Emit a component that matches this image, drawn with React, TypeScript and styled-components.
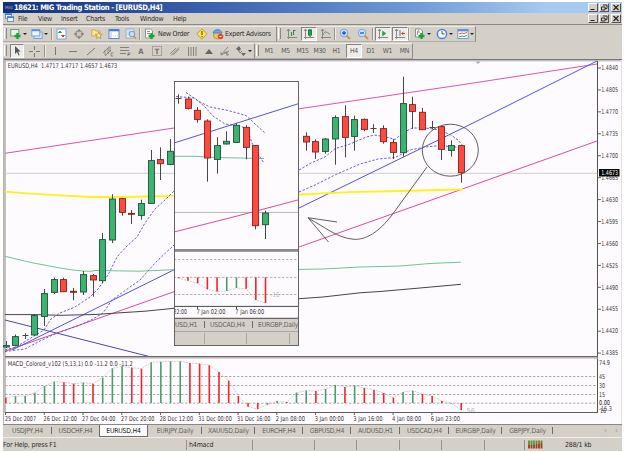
import { ReactNode } from 'react';
import styled, { createGlobalStyle } from 'styled-components';

const GlobalStyle = createGlobalStyle`
  body {
    margin: 0;
    background-color: #fefefe;
    font-family: 'DejaVu Sans Condensed', 'DejaVu Sans', sans-serif;
    font-size: 6.6px;
    color: #2c2a2a;
  }
`;

const Window = styled.div`
  width: 619px;
  height: 449px;
  padding: 2px 3px 1px;
  display: flex;
  flex-direction: column;
  white-space: nowrap;
`;

const TitleBar = styled.div`
  display: flex;
  align-items: center;
  height: 11px;
  background: linear-gradient(90deg, #12307c, #3b60ad 33%, #6f99d8 66%, #a6caf0 88%);
  color: white;
  font-size: 7.6px;
  font-weight: bold;
  letter-spacing: -0.39px;
`;

const TitleIcon = styled.div`
  width: 7px;
  margin: 0 2px;
  font-size: 4px;
  color: #7d86ac;
  letter-spacing: 0;
`;

const Spacer = styled.div`
  flex: 1;
`;

const WinButtons = styled.div`
  display: flex;
  margin-right: 1px;
  gap: 1px;
`;

const WinButton = styled.div`
  width: 8px;
  height: 7px;
  background-color: #d4d0c8;
  border: 1px solid;
  border-color: #f8f8f5 #55524f #55524f #f8f8f5;

  &:last-child {
    margin-left: 1px;
  }

  svg {
    display: block;
  }
`;

const MenuBar = styled.div`
  display: flex;
  align-items: center;
  box-sizing: border-box;
  height: 12px;
  background-color: #d4d0c8;
  border-bottom: 1px solid #8c8984;
`;

const MenuItem = styled.div<{ $w: number }>`
  width: ${(p) => p.$w}px;
  font-size: 7px;
  letter-spacing: -0.25px;
`;

const Toolbar = styled.div`
  display: flex;
  align-items: center;
  box-sizing: border-box;
  height: 17px;
  background-color: #d4d0c8;
`;

const ToolGroup = styled.div<{ $w: number }>`
  display: flex;
  align-items: center;
  box-sizing: border-box;
  width: ${(p) => p.$w}px;
  height: 16px;
  border-right: 1px solid #8e8b86;
  border-bottom: 1px solid #b1aea8;
  border-top: 1px solid #eeece7;
`;

const Grip = styled.div`
  width: 1px;
  height: 11px;
  margin: 0 2px 0 1px;
  flex-shrink: 0;
  border-left: 1px solid #fff;
  border-right: 1px solid #8c8984;
`;

const Divider = styled.div`
  width: 1px;
  height: 12px;
  flex-shrink: 0;
  background-color: #95928c;
  border-right: 1px solid #f1efea;
`;

const Tool = styled.div<{ $w: number; $on?: boolean }>`
  display: flex;
  align-items: center;
  justify-content: center;
  gap: 1px;
  box-sizing: border-box;
  flex-shrink: 0;
  width: ${(p) => p.$w}px;
  height: 14px;
  ${(p) =>
    p.$on &&
    `margin-left: 1px;
    background-color: #efede9;
    border: 1px solid;
    border-color: #85827d #fff #fff #85827d;`}
`;

// tools with a drop-down sit a little to the left of their slot
const MenuTool = styled(Tool)`
  padding-right: 2px;
`;

const Arrow = styled.div`
  border: 2px solid transparent;
  border-top-color: #222;
  border-bottom: 0;
`;

const ToolText = styled.div<{ $w: number; $ls: number }>`
  width: ${(p) => p.$w}px;
  font-size: 7px;
  letter-spacing: ${(p) => p.$ls}px;
`;

const Period = styled(Tool)`
  color: #5d5a58;
  font-size: 6.8px;
  letter-spacing: -0.3px;
`;

const ChartArea = styled.div`
  position: relative;
  height: 365px;

  svg {
    display: block;
  }
`;

const Inset = styled.div`
  position: absolute;
  left: 171px;
  top: 22px;
  width: 123px;
  height: 263px;
  overflow: hidden;
  border: 1px solid #66625f;
  background-color: #fefbff;
`;

const InsetTabs = styled.div`
  display: flex;
  align-items: center;
  height: 12px;
  background-color: #d4d0c8;
  border-bottom: 1px solid #aba8a2;
  color: #565350;
`;

const InsetStatus = styled.div`
  display: flex;
  height: 13px;
  background-color: #d4d0c8;
`;

const InsetCell = styled.div<{ $w: number }>`
  box-sizing: border-box;
  width: ${(p) => p.$w}px;
  margin: 1px 0;
  border-right: 1px solid #aaa7a1;
`;

const TabBar = styled.div`
  display: flex;
  box-sizing: border-box;
  height: 14px;
  background-color: #d4d0c8;
  border-top: 1px solid #8b8883;
  border-bottom: 1px solid #efede8;
`;

const Tab = styled.div<{ $w: number; $active?: boolean; $bar?: boolean }>`
  position: relative;
  display: flex;
  align-items: center;
  justify-content: center;
  box-sizing: border-box;
  width: ${(p) => p.$w}px;
  height: 12px;
  flex-shrink: 0;
  font-size: 6.8px;
  letter-spacing: -0.2px;
  color: ${(p) => (p.$active ? '#111' : '#666360')};
  background-color: ${(p) => (p.$active ? '#fff' : 'transparent')};
  ${(p) =>
    p.$active &&
    `border: 1px solid #6f6c69;
    border-top: 0;`}
  ${(p) =>
    p.$bar &&
    `&::after {
      content: '';
      position: absolute;
      right: 0;
      top: 2px;
      width: 1px;
      height: 7px;
      background-color: #6e6b68;
    }`}
`;

const InsetTab = styled(Tab)`
  justify-content: flex-start;
  padding-left: ${(p) => (p.$w > 30 ? 5 : 0)}px;
`;

const TabScroll = styled.div`
  margin-left: auto;
  padding-right: 1px;
  font-size: 8px;
  line-height: 11px;
  letter-spacing: 3px;
  color: #9c9994;
`;

const StatusBar = styled.div`
  display: flex;
  align-items: center;
  height: 13px;
  background-color: #d4d0c8;
`;

const StatusCell = styled.div<{ $w: number; $pad?: number; $last?: boolean }>`
  display: flex;
  align-items: center;
  box-sizing: border-box;
  width: ${(p) => p.$w}px;
  height: 10px;
  padding-left: ${(p) => p.$pad ?? 0}px;
  gap: 22px;
  font-size: 7px;
  letter-spacing: -0.17px;
  border-right: ${(p) => (p.$last ? 0 : 1)}px solid #96938e;
`;

const UP = '#3cb371';
const DOWN = '#ff4a40';
const GREEN = '#4d9c6c';
const RED = '#f0252c';

// x, body top, body bottom, wick top, wick bottom, direction
type CandleData = [number, number, number, number, number, 'u' | 'd' | 'x'];

const candles: CandleData[] = [
  [6.3, 345.3, 347.3, 341, 348, 'u'],
  [15.5, 336.3, 345.7, 334.5, 346.5, 'u'],
  [25, 335.7, 335.7, 333.3, 339, 'x'],
  [34.7, 315.3, 335.3, 314, 336, 'u'],
  [44.3, 293.3, 316.7, 289, 326, 'u'],
  [54, 279.3, 292.7, 277.7, 294, 'u'],
  [63.7, 279.3, 292, 277.7, 292, 'd'],
  [73.3, 291, 292.5, 288, 300.3, 'd'],
  [83.3, 274.3, 292.3, 271, 295, 'u'],
  [93, 275.3, 280.3, 274, 296.7, 'd'],
  [102.5, 239.3, 281, 233, 283.3, 'u'],
  [112.3, 198.7, 240.3, 194.3, 243, 'u'],
  [122, 198.3, 212.7, 198, 215.7, 'd'],
  [131.7, 213, 214.5, 210, 224, 'd'],
  [141.3, 203.3, 215.7, 199.7, 219.7, 'u'],
  [151, 160.3, 203.7, 150, 204, 'u'],
  [160.7, 159.3, 164, 147.3, 180, 'd'],
  [170.3, 151, 164.7, 139, 165, 'u'],
  [306.3, 136, 142.3, 132.3, 150.7, 'd'],
  [315.7, 141.3, 152.3, 139.3, 159, 'd'],
  [325.3, 138.7, 151.7, 138, 153.7, 'u'],
  [335.3, 117.3, 139.3, 115.3, 164.7, 'u'],
  [345, 116.3, 137.7, 105.3, 157.3, 'd'],
  [354.7, 119.3, 136.7, 115.7, 150.7, 'u'],
  [364.2, 119, 129.7, 118.5, 131.3, 'd'],
  [373.7, 128, 128, 124.3, 133, 'x'],
  [383.3, 128.3, 142, 125.3, 143.7, 'd'],
  [393.3, 142.3, 152.7, 139, 159, 'd'],
  [403, 103.3, 153, 76.7, 156.7, 'u'],
  [412.7, 104.3, 111.7, 96.7, 129, 'd'],
  [422.3, 112, 130, 108, 130, 'd'],
  [432, 127.7, 127.7, 121, 129.3, 'x'],
  [441.7, 126.3, 149.7, 125.7, 160, 'd'],
  [451.3, 145.3, 150.7, 140.3, 156.7, 'u'],
  [461, 145.3, 173, 145, 182.7, 'd'],
];

const insetCandles: CandleData[] = [
  [178.3, 98, 98, 94.3, 103.7, 'x'],
  [188, 98.7, 108.7, 96.5, 109.5, 'd'],
  [197.7, 110, 119.7, 107, 122.7, 'd'],
  [207.3, 120.7, 158.3, 119.3, 181.7, 'd'],
  [217, 145.3, 159.7, 137.3, 173.7, 'u'],
  [226.7, 141, 144.3, 131.3, 144.3, 'u'],
  [236.3, 125, 142.7, 123.3, 142.7, 'u'],
  [246, 127, 147.7, 125.3, 159.3, 'd'],
  [255.7, 145.3, 226, 145, 229.3, 'd'],
  [265.3, 212.7, 225, 210.7, 239, 'u'],
];

// histogram values as pixel tops, negative values hang below the zero line
const macd: [number, 'g' | 'r'][] = [
  [397.7, 'r'], [396.3, 'g'], [396, 'g'], [392.7, 'g'], [386, 'g'], [381.7, 'g'],
  [382.3, 'r'], [383.7, 'r'], [382.7, 'g'], [383.7, 'r'], [377.7, 'g'], [368.3, 'g'],
  [366.3, 'g'], [367.7, 'r'], [368.7, 'r'], [362.3, 'g'], [361.7, 'g'], [361.3, 'g'],
  [361.3, 'g'], [363, 'r'], [363.7, 'r'], [365.3, 'r'], [372, 'r'], [380.7, 'r'],
  [396, 'r'], [406.7, 'r'], [409, 'r'], [404.7, 'g'], [401, 'g'], [402, 'r'],
  [392.7, 'g'], [390.5, 'g'], [391, 'r'], [389, 'g'], [385, 'g'], [387, 'r'],
  [385.7, 'g'], [388, 'r'], [390, 'r'], [393, 'r'], [397.7, 'r'], [392, 'g'],
  [390.7, 'g'], [394, 'r'], [396, 'r'], [401, 'r'], [403.6, 'g'], [410, 'r'],
];

const insetMacd: [number, 'g' | 'r'][] = [
  [278.2, 'r'], [280.7, 'r'], [283.3, 'r'], [289.3, 'r'], [291.5, 'r'],
  [291, 'g'], [288, 'g'], [288.8, 'r'], [300, 'r'], [303, 'r'],
];

const prices = [
  '1.4840', '1.4805', '1.4770', '1.4735', '1.4700', '1.4665', '1.4630',
  '1.4595', '1.4560', '1.4525', '1.4490', '1.4455', '1.4420', '1.4385',
];

const dates: [number, number, string][] = [
  [5, 31, '25 Dec 2007'],
  [43.5, 33.5, '26 Dec 12:00'],
  [82, 33.5, '27 Dec 04:00'],
  [121, 33.5, '27 Dec 20:00'],
  [159.7, 33.5, '28 Dec 12:00'],
  [198.3, 33.5, '31 Dec 00:00'],
  [237, 33.5, '31 Dec 16:00'],
  [275.7, 29.3, '2 Jan 08:00'],
  [314.7, 29.3, '3 Jan 00:00'],
  [353.3, 29.3, '3 Jan 16:00'],
  [392, 29.3, '4 Jan 08:00'],
  [430.7, 29.3, '6 Jan 23:00'],
];

const Candle = ({ data }: { data: CandleData }) => {
  const [x, top, bottom, high, low, dir] = data;
  const cx = Math.floor(x) + 0.5;
  return (
    <g stroke="#4a4642">
      <path d={`M${cx} ${high}V${low}`} />
      {dir === 'x' ? (
        <path d={`M${cx - 3} ${Math.floor(top) + 0.5}h6`} />
      ) : (
        <rect
          x={cx - 3}
          y={top + 0.3}
          width="6"
          height={Math.max(bottom - top - 0.6, 1)}
          fill={dir === 'u' ? UP : DOWN}
          stroke={dir === 'u' ? '#1e5137' : '#80231d'}
          strokeWidth=".9"
        />
      )}
    </g>
  );
};

const Label = ({ x, y, w, children, fill = '#3a3636' }: {
  x: number;
  y: number;
  w: number;
  children: string;
  fill?: string;
}) => (
  <text x={x} y={y} textLength={w} lengthAdjust="spacingAndGlyphs" fontSize="6.6" fill={fill}>
    {children}
  </text>
);

const Histogram = ({ data, x0, zero }: { data: [number, 'g' | 'r'][]; x0: number; zero: number }) => (
  <>
    <polyline
      points={data.map(([y], i) => `${x0 + i * 9.69},${y}`).join(' ')}
      fill="none"
      stroke="#c9c5c4"
      strokeDasharray="2 1"
      strokeWidth=".8"
    />
    {data.map(([y, c], i) => (
      <path
        key={i}
        d={`M${x0 + i * 9.69} ${zero}V${y}`}
        stroke={c === 'g' ? GREEN : RED}
        strokeWidth="1.6"
      />
    ))}
  </>
);

const MainChart = () => (
  <svg width="619" height="365" viewBox="3 59 619 365" fill="none">
    <rect x="3" y="59" width="619" height="365" fill="#fefbff" />
    <path d="M3 59.5H622" stroke="#787572" />
    <path d="M4 60.8H621" stroke="#aaa6a5" />
    <path d="M3.5 59V424" stroke="#b6b2ad" />
    <path d="M5 61V413" stroke="#85817e" />
    <path d="M621.5 61V424" stroke="#e3e0dd" />
    <path d="M475.5 61.5h5l-2.5 2.5z" fill="#aaa" />

    <path d="M5 173.3H597" stroke="#d2cfcb" />
    <path d="M5 153.3L174 128L299 108.8L465 84.3L597 64" stroke="#dc55a8" />
    <path d="M5 351.3L174 291.7L299 247L431 200.2L597 141" stroke="#dc4a9e" />
    <path d="M12 350L174 269.8L299 208L465 127L597 61" stroke="#5350e4" />
    <path d="M5 320L148 356.2" stroke="#4d4a9b" />
    <path
      d="M5 314.6H35L60 315.3L95 314.5L120 312.8L145 311.2L174 308.3M299 298.7L323 297L360 292.8L380 291.5L420 288L461 284.3"
      stroke="#4a4442"
    />
    <path
      d="M5 256.3Q30 263 60 268T95 270.5L140 271.2L174 269.7M299 269.4L323 269L360 267L400 266L430 263.5L461 262.2"
      stroke="#70c597"
    />
    <path
      d="M5 191.7L30 193.6L65 195.7L90 197L125 197L174 195.8M299 194.5L350 192.2L400 191L440 190L463 189.3"
      stroke="#fff218"
      strokeWidth="1.8"
    />
    <g stroke="#5552cf" strokeDasharray="2.4 1.6" strokeWidth=".9">
      <path d="M5 350L16 347L44 330L51 319L60 313L75 307L90 297L98 289L108 275L117 257L127 246L137 237L145 223L155 209L165 200L174 191" />
      <path d="M5 351.5L25 349L40 341L55 334L80 325L93 319L103 313L112 300L130 287L140 280L155 263L174 245" />
      <path d="M299 170L311 163L325 157L335 148.7L350 144L365 137.5L374 135L386 137L395 139.5L403 133L412 128L425 128L440 130L451 135L458 140L463 146" />
      <path d="M299 192L315 185L337 174L360 164L378 159L395 157.5L410 150L425 147L440 145.5L461 147.5" />
    </g>

    {candles.map((c) => (
      <Candle key={c[0]} data={c} />
    ))}

    <g stroke="#625e5c">
      <ellipse cx="450.3" cy="150.2" rx="28" ry="26" />
      <path d="M427 167L392 215C379 232 366 240 354 239.3C337 238 325 227 308 218" />
      <path d="M337 222L308 217.7L328.5 242" />
    </g>

    <path d="M597.5 61V413" stroke="#565250" />
    {prices.map((p, i) => (
      <g key={p}>
        <path d={`M598 ${68 + i * 21.93}h3`} stroke="#68625f" />
        <Label x={601.3} y={70.2 + i * 21.93} w={16.7}>
          {p}
        </Label>
      </g>
    ))}
    <rect x="599" y="169" width="20.5" height="7.5" fill="#080808" />
    <Label x={601.3} y={175.2} w={16.7} fill="#fff">
      1.4673
    </Label>
    <Label x={7.7} y={67.8} w={109.5}>
      {'EURUSD,H4\u00a0 1.4717 1.4717 1.4657 1.4673'}
    </Label>

    <path d="M5 356.8H598" stroke="#6d6664" strokeWidth="1.6" />
    <path d="M5 358.2H598" stroke="#c5c2c0" />
    <path
      d="M5 376.5H597M5 385.5H597M5 394.5H597M5 403.2H597"
      stroke="#a5a19f"
      strokeDasharray="2.4 1.6"
      strokeWidth=".9"
    />
    <Histogram data={macd} x0={5.8} zero={403} />
    <Label x={7.7} y={366.2} w={125}>
      MACD_Colored_v102 (5,13,1) 0.0 -11.2 0.0 -11.2
    </Label>
    <Label x={466.5} y={412.6} w={8.5} fill="#b8b5b3">
      56
    </Label>
    <path d="M5 412.5H598" stroke="#625e5b" />
    {dates.map(([x, w, text], i) => (
      <g key={text}>
        <path d={`M${5.5 + i * 38.76} 412v3`} stroke="#625e5b" />
        <Label x={x} y={421} w={w}>
          {text}
        </Label>
      </g>
    ))}
    <Label x={599} y={364.6} w={11}>74.9</Label>
    <Label x={599} y={378.6} w={6}>45</Label>
    <Label x={599} y={387.8} w={6}>30</Label>
    <Label x={599} y={396.8} w={6}>15</Label>
    <Label x={599} y={405.2} w={11} fill="#111">0.00</Label>
    <Label x={599} y={411.4} w={13}>-15.3</Label>
    <Label x={600} y={412.8} w={6}>16</Label>
  </svg>
);

const InsetChart = () => (
  <svg width="124" height="237" viewBox="175 82 124 237" fill="none">
    <path d="M174 212.4H299" stroke="#bbb8b5" />
    <path d="M174 143L299 103.5" stroke="#5350e4" />
    <path d="M174 156.3L195 156.3L215 157.5L264 158.5" stroke="#70c597" />
    <path d="M174 232L240 215.3L299 199.7" stroke="#dc4a9e" />
    <g stroke="#5552cf" strokeDasharray="2.4 1.6" strokeWidth=".9">
      <path d="M186 92.5L198 101L210 107L228 110.5L246 115.5L255 124L265 133" />
      <path d="M176 96.5L195 98L205 107L213 116L225 124L241 126L248 131L252 143L258 154L264 163" />
    </g>
    {insetCandles.map((c) => (
      <Candle key={c[0]} data={c} />
    ))}
    <rect x="174" y="249" width="125" height="2.8" fill="#8b8887" />
    <path
      d="M174 259.5H299M174 277.4H299M174 294.5H299"
      stroke="#aaa7a3"
      strokeDasharray="2.4 1.6"
      strokeWidth=".9"
    />
    <Histogram data={insetMacd} x0={178.3} zero={277.3} />
    <Label x={270.5} y={296.8} w={9} fill="#b8b5b3">-16</Label>
    <path d="M174 306.4H299M197.5 306v3M236.5 306v3" stroke="#454c4a" />
    <Label x={173.5} y={313.8} w={13.5}>22:00</Label>
    <Label x={196.5} y={313.8} w={29}>7 Jan 02:00</Label>
    <Label x={235.3} y={313.8} w={29}>7 Jan 06:00</Label>
    <path d="M174 318.3H299" stroke="#44403e" />
  </svg>
);

const Icon = ({ children, w = 12 }: { children: ReactNode; w?: number }) => (
  <svg width={w} height="12" viewBox={`0 0 ${w} 12`} fill="none" stroke="#7a7773">
    {children}
  </svg>
);

const Plus = () => <path d="M7.5 5v6M4.5 8h6" stroke="#18a238" strokeWidth="2.4" />;

const Axes = () => <path d="M2.5 1v10M1 9.5h10M1 3l1.5-2L4 3" stroke="#8b8783" />;

const Zoom = ({ plus }: { plus?: boolean }) => (
  <Icon>
    <path d="M7.5 7.5l3.5 3.5" stroke="#c79b36" strokeWidth="2" />
    <circle cx="5" cy="5" r="3.8" fill="#c7e0fa" stroke="#7ba1de" />
    <path d={plus ? 'M3 5h4M5 3v4' : 'M3 5h4'} stroke="#2956b8" strokeWidth="1.3" />
  </Icon>
);

const WindowControls = () => (
  <WinButtons>
    <WinButton>
      <svg width="8" height="7">
        <path d="M1.5 5.5h4" stroke="#222" />
      </svg>
    </WinButton>
    <WinButton>
      <svg width="8" height="7" fill="none" stroke="#222" strokeWidth=".9">
        <path d="M3 1h4v3.5H5M1.5 3h3.5v3H1.5z" />
      </svg>
    </WinButton>
    <WinButton>
      <svg width="8" height="7">
        <path d="M1.5 1l5 5M6.5 1l-5 5" stroke="#222" strokeWidth="1.2" />
      </svg>
    </WinButton>
  </WinButtons>
);

const StandardToolbar = () => (
  <Toolbar>
    <ToolGroup $w={274}>
      <Grip />
      <MenuTool $w={20}>
        <Icon>
          <rect x=".8" y="1.5" width="8" height="6.5" fill="#eaf5e9" stroke="#6b9a80" />
          <Plus />
        </Icon>
        <Arrow />
      </MenuTool>
      <MenuTool $w={22}>
        <Icon>
          <rect x="3" y="4" width="8.2" height="6.5" fill="#dbeafa" stroke="#7a9ed0" />
          <rect x=".8" y="1.5" width="8" height="6.5" fill="#eef5ff" stroke="#7a9ed0" />
          <path d="M1 2.5h8" stroke="#5f92da" strokeWidth="1.5" />
        </Icon>
        <Arrow />
      </MenuTool>
      <Divider />
      <Tool $w={17}>
        <Icon w={11}>
          <rect x="1" y="1" width="9" height="10" fill="#fff" stroke="#75a5d8" />
          <path d="M2.5 4.5L4 3l1.5 1.5z" fill="#18a238" stroke="#18a238" />
          <path d="M5.5 7.5h3L7 9z" fill="#df392c" stroke="#df392c" />
        </Icon>
      </Tool>
      <Tool $w={18}>
        <Icon>
          <circle cx="6" cy="6" r="3.4" />
          <path d="M6 1v3.5M6 7.5V11M1 6h3.5M7.5 6H11" />
        </Icon>
      </Tool>
      <Tool $w={17}>
        <Icon>
          <path d="M.8 3V1.7h3l1 1.3h4v5h-8z" fill="#ffe589" stroke="#c2a95c" />
          <path d="M7.7 4l1 2.2 2.5.2-2 1.6.7 2.5-2.2-1.3-2.2 1.3.7-2.5-2-1.6 2.5-.2z" fill="#fff176" stroke="#a88c3c" strokeWidth=".7" />
        </Icon>
      </Tool>
      <Tool $w={17}>
        <Icon>
          <rect x="1" y="1.5" width="10" height="9" fill="#fff" stroke="#5b87d2" />
          <path d="M1 2.5h10" stroke="#4478d0" strokeWidth="1.6" />
          <path d="M3 4v6" stroke="#a4bfe8" />
          <path d="M5 8h5" stroke="#c9dbf3" strokeDasharray="1 1" />
        </Icon>
      </Tool>
      <Tool $w={17}>
        <Icon>
          <path d="M1 1h8v9H1z" fill="#eef5fc" stroke="#9aabc2" />
          <path d="M3 2v6M5 2v6" stroke="#abc6e2" />
          <circle cx="7" cy="6" r="2.8" fill="#c8def5" stroke="#7896c6" />
          <path d="M9 8.3l2.2 2.5" stroke="#c79b36" strokeWidth="1.6" />
        </Icon>
      </Tool>
      <Divider />
      <Tool $w={17}>
        <Icon>
          <path d="M1.5 1h5l2 2v7h-7z" fill="#fff" stroke="#8b9892" />
          <path d="M3 3.5h3M3 5.5h3" stroke="#777" strokeWidth=".8" />
          <Plus />
        </Icon>
      </Tool>
      <ToolText $w={35} $ls={-0.28}>New Order</ToolText>
      <Tool $w={17}>
        <Icon>
          <path d="M6 .8L11.2 6 6 11.2.8 6z" fill="#ffe24d" stroke="#b8a04a" />
          <path d="M6 3v4M6 8v1.3" stroke="#776629" strokeWidth="1.3" />
        </Icon>
      </Tool>
      <Tool $w={15}>
        <Icon>
          <circle cx="5.5" cy="7" r="4" fill="#f5cb51" stroke="#bd963b" />
          <path d="M1 5C2 .5 9 .5 10 5z" fill="#66a7e7" stroke="#4d82c2" />
          <circle cx="8.5" cy="8.5" r="2.8" fill="#e64328" stroke="none" />
          <path d="M7.5 8.5h2" stroke="#fff" />
        </Icon>
      </Tool>
      <ToolText $w={48} $ls={-0.24}>Expert Advisors</ToolText>
    </ToolGroup>
    <ToolGroup $w={199}>
      <Grip />
      <Tool $w={17}>
        <Icon>
          <Axes />
          <path d="M5.5 4v4M7.5 2v5M8 2.5h1.5" stroke="#218c42" />
        </Icon>
      </Tool>
      <Tool $w={16} $on>
        <Icon>
          <Axes />
          <path d="M7 1v8" stroke="#187d36" />
          <rect x="5.5" y="2" width="3" height="5" fill="#28a950" stroke="#187d36" />
        </Icon>
      </Tool>
      <Tool $w={17}>
        <Icon>
          <Axes />
          <path d="M3 7C4.5 3 6 3 10 6.5" stroke="#4f9967" />
        </Icon>
      </Tool>
      <Divider />
      <Tool $w={18}><Zoom plus /></Tool>
      <Tool $w={18}><Zoom /></Tool>
      <Divider />
      <Tool $w={16} $on>
        <Icon>
          <Axes />
          <path d="M5.5 3L9 5.5 5.5 8z" fill="#22a243" stroke="#22a243" strokeWidth=".5" />
        </Icon>
      </Tool>
      <Tool $w={16} $on>
        <Icon>
          <Axes />
          <path d="M6 2v6" stroke="#4573c8" />
          <path d="M11 5.5H8M9.5 4L7.5 5.5 9.5 7" stroke="#d94127" />
        </Icon>
      </Tool>
      <Divider />
      <Tool $w={24}>
        <Icon>
          <path d="M1.5 1h5l2 2v6h-7z" fill="#fff" stroke="#85938a" />
          <path d="M5 2c-2 0-1 4-2 5M3 4h3" strokeWidth=".8" />
          <Plus />
        </Icon>
        <Arrow />
      </Tool>
      <Tool $w={21}>
        <Icon>
          <circle cx="6" cy="6" r="4.6" fill="#f3f9ff" stroke="#5584cf" strokeWidth="1.5" />
          <path d="M6 3v3h2.5" stroke="#555" />
        </Icon>
        <Arrow />
      </Tool>
      <Tool $w={21}>
        <Icon>
          <rect x=".8" y="1.5" width="10.4" height="9" fill="#fff" stroke="#7398cf" />
          <path d="M1 2.5h10" stroke="#5c8cd4" strokeWidth="1.8" />
          <path d="M2 6l3-1 2 .5 3-1" stroke="#cf5948" />
          <path d="M2 9l3-1 2 .5 3-1" stroke="#3f9958" />
        </Icon>
        <Arrow />
      </Tool>
    </ToolGroup>
  </Toolbar>
);

const LineToolbar = () => (
  <Toolbar>
    <ToolGroup $w={252}>
      <Grip />
      <Tool $w={14} $on>
        <Icon w={10}>
          <path d="M3 1v8l2-2 1.5 3.5 1-.5L6.2 6.5h2.5z" fill="#555" stroke="none" />
        </Icon>
      </Tool>
      <Tool $w={20}>
        <Icon><path d="M6.5 1v4M6.5 8v4M1 6.5h4M8 6.5h4" /></Icon>
      </Tool>
      <Divider />
      <Tool $w={18}><Icon><path d="M6.5 2v8" /></Icon></Tool>
      <Tool $w={18}><Icon><path d="M2 6.5h8" /></Icon></Tool>
      <Tool $w={17}><Icon><path d="M2 10l8-7" /></Icon></Tool>
      <Tool $w={17}>
        <Icon>
          <path d="M1 8l6-6M3 11l6-6M3 5v5M6 3v6M8 1v6M9 8h2.5M9 11h2.5M9 8v3" strokeWidth=".8" />
        </Icon>
      </Tool>
      <Tool $w={17}>
        <Icon>
          <path d="M1 2.5h9M1 5.5h9M1 8.5h6M9 11V8h2.5M9 9.5h2" strokeWidth=".9" />
        </Icon>
      </Tool>
      <Tool $w={15}>
        <Icon>
          <text x="3.2" y="9.3" fontSize="7.6" fontWeight="bold" fill="#74716e" stroke="none">A</text>
        </Icon>
      </Tool>
      <Tool $w={18}>
        <Icon>
          <rect x="1.5" y="1.5" width="9" height="9" strokeDasharray="1 1" />
          <text x="3.7" y="8.8" fontSize="7.2" fontWeight="bold" fill="#74716e" stroke="none">T</text>
        </Icon>
      </Tool>
      <Tool $w={17}>
        <Icon><path d="M1 9l6-6M4 10l6-6M2 10.5l8-8" strokeWidth=".8" /></Icon>
      </Tool>
      <Tool $w={17}>
        <Icon><path d="M2.5 2v9M5 2v9M7.5 2v9M10 2v9" strokeWidth=".9" /></Icon>
      </Tool>
      <Tool $w={17}>
        <Icon><path d="M2 9l4-5 4 5z" fill="#686563" stroke="none" /></Icon>
      </Tool>
      <Tool $w={16}>
        <Icon><path d="M2 10l7-8M2 10l8-4M2 10V7M8 6v5M5 7l5 3" strokeWidth=".8" /></Icon>
      </Tool>
      <Tool $w={21}>
        <Icon>
          <path d="M1 4l3-3 2 3-2 2zM6 8h5L8.5 11z" fill="#686563" stroke="none" />
          <path d="M3 5l2 3 2-2" />
        </Icon>
        <Arrow />
      </Tool>
    </ToolGroup>
    <ToolGroup $w={158}>
      <Grip />
      <Period $w={16}>M1</Period>
      <Period $w={17}>M5</Period>
      <Period $w={17}>M15</Period>
      <Period $w={17}>M30</Period>
      <Period $w={17}>H1</Period>
      <Period $w={16} $on>H4</Period>
      <Period $w={17}>D1</Period>
      <Period $w={17}>W1</Period>
      <Period $w={17}>MN</Period>
    </ToolGroup>
  </Toolbar>
);

const tabs: { name: string; w: number; active?: boolean; bar?: boolean }[] = [
  { name: 'USDJPY,H4', w: 49, bar: true },
  { name: 'USDCHF,H4', w: 47 },
  { name: 'EURUSD,H4', w: 49, active: true },
  { name: 'EURJPY,Daily', w: 54, bar: true },
  { name: 'XAUUSD,Daily', w: 53, bar: true },
  { name: 'EURCHF,H4', w: 48, bar: true },
  { name: 'GBPUSD,H4', w: 48, bar: true },
  { name: 'AUDUSD,H1', w: 49, bar: true },
  { name: 'USDCAD,H4', w: 49, bar: true },
  { name: 'EURGBP,Daily', w: 53, bar: true },
  { name: 'GBPJPY,Daily', w: 51, bar: true },
];

const App = () => {
  return (
    <>
      <GlobalStyle />
      <Window>
        <TitleBar>
          <TitleIcon>MIG</TitleIcon>
          18621: MIG Trading Station - [EURUSD,H4]
          <Spacer />
          <WindowControls />
        </TitleBar>
        <MenuBar>
          <MenuItem $w={15}>
            <svg width="12" height="11" fill="#eef4ff" stroke="#6c93cf">
              <rect x="2.5" y="1.5" width="6" height="5" />
              <rect x="4.5" y="4.5" width="6" height="5" />
              <path d="M2 2.5h7M4 5.5h7" stroke="#3d75ca" />
            </svg>
          </MenuItem>
          <MenuItem $w={20}>File</MenuItem>
          <MenuItem $w={23}>View</MenuItem>
          <MenuItem $w={25}>Insert</MenuItem>
          <MenuItem $w={29}>Charts</MenuItem>
          <MenuItem $w={25}>Tools</MenuItem>
          <MenuItem $w={33}>Window</MenuItem>
          <MenuItem $w={20}>Help</MenuItem>
          <Spacer />
          <WindowControls />
        </MenuBar>
        <StandardToolbar />
        <LineToolbar />
        <ChartArea>
          <MainChart />
          <Inset>
            <InsetChart />
            <InsetTabs>
              <InsetTab $w={30} $bar>USD,H1</InsetTab>
              <InsetTab $w={48} $bar>USDCAD,H4</InsetTab>
              <InsetTab $w={50}>EURGBP,Daily</InsetTab>
            </InsetTabs>
            <InsetStatus>
              <InsetCell $w={30} />
              <InsetCell $w={42} />
              <InsetCell $w={43} />
            </InsetStatus>
          </Inset>
        </ChartArea>
        <TabBar>
          {tabs.map((tab) => (
            <Tab key={tab.name} $w={tab.w} $active={tab.active} $bar={tab.bar}>
              {tab.name}
            </Tab>
          ))}
          <TabScroll>‹ ›</TabScroll>
        </TabBar>
        <StatusBar>
          <StatusCell $w={184}>For Help, press F1</StatusCell>
          <StatusCell $w={66} $pad={2}>h4macd</StatusCell>
          <StatusCell $w={62} />
          <StatusCell $w={42} />
          <StatusCell $w={43} />
          <StatusCell $w={42} />
          <StatusCell $w={43} />
          <StatusCell $w={40} />
          <StatusCell $w={96} $pad={2} $last>
            <svg width="16" height="9">
              <path d="M2 .5V5M4.5 .5V5M7 .5V5M9.5 .5V4M12 .5V4M14.5 .5V3" stroke="#5d8f2c" strokeWidth="1.8" />
              <path d="M2 5v3.5M4.5 5v3.5M7 5v3.5M9.5 4v4.5M12 4v4.5M14.5 3v5.5" stroke="#a03524" strokeWidth="1.8" />
            </svg>
            288/1 kb
          </StatusCell>
        </StatusBar>
      </Window>
    </>
  );
};

export default App;
